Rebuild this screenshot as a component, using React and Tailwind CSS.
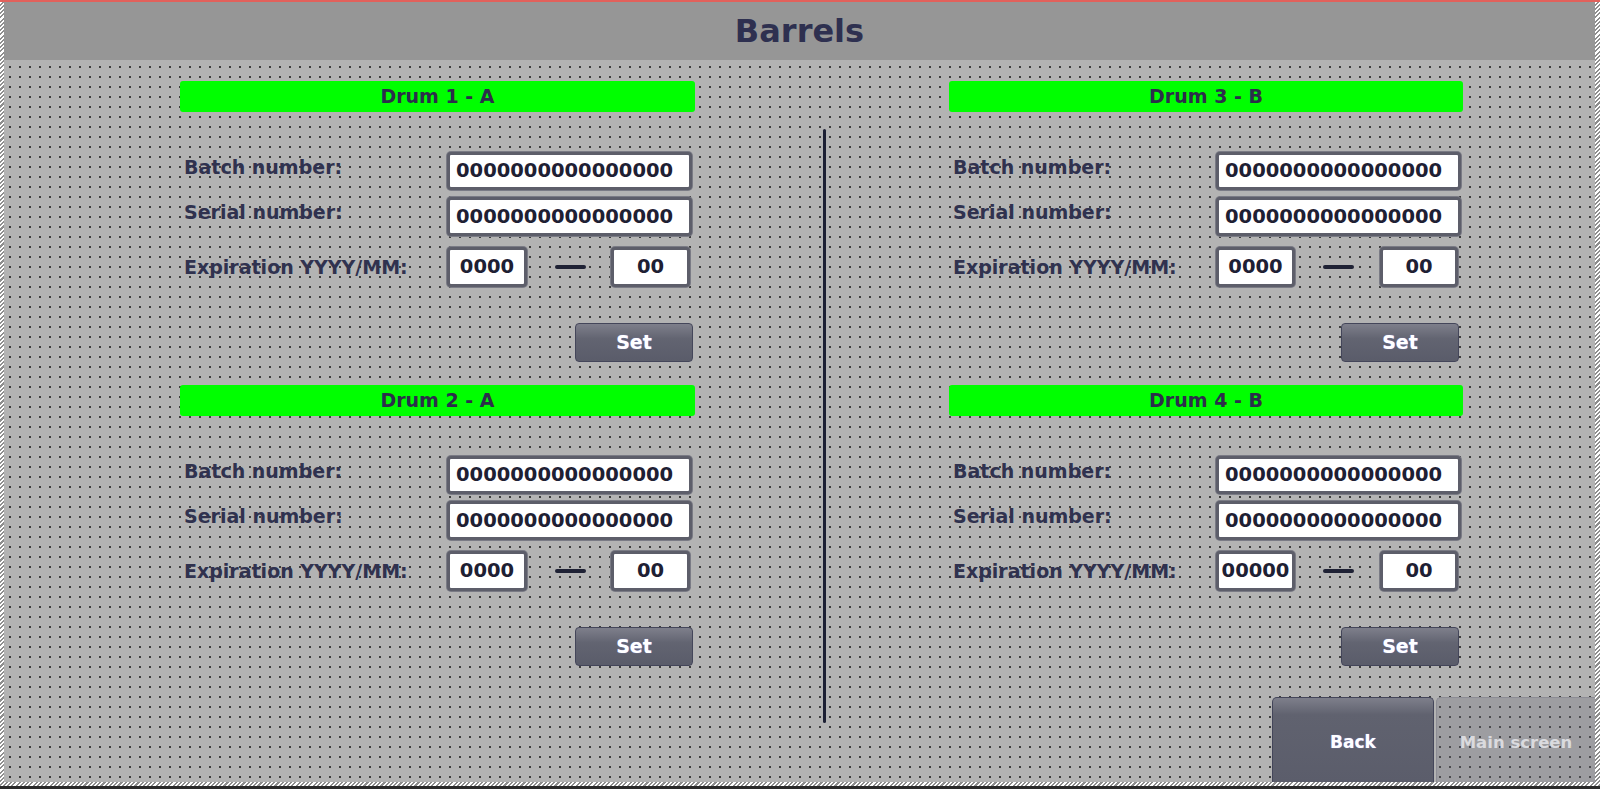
const hatch = 'bg-[repeating-linear-gradient(135deg,#ffffff_0px,#ffffff_1.5px,#8e8e8e_1.5px,#8e8e8e_3px)]'

const drums = [
  [
    { title: 'Drum 1 - A', year: '0000' },
    { title: 'Drum 2 - A', year: '0000' },
  ],
  [
    { title: 'Drum 3 - B', year: '0000' },
    { title: 'Drum 4 - B', year: '00000' },
  ],
]

// column geometry (the two sides are nearly identical)
const leftCol = { labelW: 267, inputW: 245, yearW: 80, dashGap: 28, dashW: 31, monthGap: 25, monthW: 79, setX: 395, width: 515 }
const rightCol = { labelW: 267, inputW: 245, yearW: 79, dashGap: 28, dashW: 31, monthGap: 26, monthW: 78, setX: 392, width: 514 }

function Field({ value, width, height, center }) {
  return (
    <div
      style={{ width, height }}
      className={`bg-white border-[3px] border-[#5d5e6a] rounded-[4px] shadow-[0_0_0_1px_#7a7b85] flex items-center overflow-hidden whitespace-nowrap text-[19.5px] font-bold text-[#1e2033] ${center ? 'justify-center' : 'pl-[6px]'}`}
    >
      {value}
    </div>
  )
}

function Label({ children, width, lift }) {
  return (
    <div style={{ width }} className={`pl-[4px] text-[19px] font-bold text-[#30324f] whitespace-nowrap ${lift ? 'mb-[8px]' : ''}`}>
      {children}
    </div>
  )
}

function SetButton({ x }) {
  return (
    <button
      style={{ marginLeft: x }}
      className="w-[118px] h-[39px] rounded-[4px] border border-[#44465a] bg-[linear-gradient(#7e7f8b,#626471_40%,#5a5c6a)] text-white text-[19px] font-bold [text-shadow:0_0_1px_#9aa0ff]"
    >
      Set
    </button>
  )
}

function Drum({ drum, g, first }) {
  return (
    <div className={first ? '' : 'mt-[23px]'}>
      <div className="h-[31px] bg-[#00ff00] rounded-[3px] flex items-center justify-center text-[19px] font-bold text-[#2c2e4b]">
        {drum.title}
      </div>
      <div className="mt-[40px] h-[38px] flex items-center">
        <Label width={g.labelW} lift>Batch number:</Label>
        <Field value="0000000000000000" width={g.inputW} height={38} />
      </div>
      <div className="mt-[7px] h-[39px] flex items-center">
        <Label width={g.labelW} lift>Serial number:</Label>
        <Field value="0000000000000000" width={g.inputW} height={39} />
      </div>
      <div className="mt-[11px] h-[40px] flex items-center">
        <Label width={g.labelW}>Expiration YYYY/MM:</Label>
        <Field value={drum.year} width={g.yearW} height={40} center />
        <div style={{ marginLeft: g.dashGap, width: g.dashW }} className="h-[4px] rounded-full bg-[#1f2235]" />
        <div style={{ marginLeft: g.monthGap }}>
          <Field value="00" width={g.monthW} height={40} center />
        </div>
      </div>
      <div className="mt-[36px] flex">
        <SetButton x={g.setX} />
      </div>
    </div>
  )
}

function Column({ items, g }) {
  return (
    <div style={{ width: g.width }} className="flex flex-col shrink-0">
      {items.map((d, i) => (
        <Drum key={d.title} drum={d} g={g} first={i === 0} />
      ))}
    </div>
  )
}

export default function App() {
  return (
    <div className="w-[1600px] h-[789px] flex flex-col overflow-hidden bg-[#b3b3b3] font-['DejaVu_Sans',sans-serif]">
      <div className="h-[2px] bg-[#e2615b] shrink-0" />
      <div className="flex flex-1 min-h-0">
        <div className={`w-[4px] shrink-0 ${hatch}`} />
        <div className="flex-1 flex flex-col min-w-0">
          <header className="h-[58px] shrink-0 bg-[#969696] flex items-center justify-center text-[32px] font-bold text-[#2e3050]">
            Barrels
          </header>
          <main className="flex-1 flex pl-[176px] pt-[21px] bg-[radial-gradient(circle,#2a2a2a_0.65px,transparent_1.05px)] bg-[length:10px_10px] bg-[position:1px_2px]">
            <Column items={drums[0]} g={leftCol} />
            <div className="ml-[128px] mt-[48px] w-[3px] h-[594px] shrink-0 rounded-full bg-[#1c1f33]" />
            <div className="flex-1 flex flex-col pl-[123px]">
              <Column items={drums[1]} g={rightCol} />
              <div className="mt-auto flex justify-end gap-[2px]">
                <button className="w-[162px] h-[85px] pt-[6px] rounded-t-[5px] border border-b-0 border-[#44465a] bg-[linear-gradient(#7e7f8b,#60626f_20%,#5b5d6b)] text-white text-[17px] font-bold [text-shadow:0_0_1px_#9aa0ff]">
                  Back
                </button>
                <button className="w-[159px] h-[85px] pt-[7px] rounded-tl-[5px] border-l border-t border-[#8d8d95] bg-[rgba(105,105,118,0.3)] text-[#dadade] text-[16.5px] font-bold">
                  Main screen
                </button>
              </div>
            </div>
          </main>
        </div>
        <div className={`w-[5px] shrink-0 ${hatch}`} />
      </div>
      <div className={`h-[4px] shrink-0 ${hatch}`} />
      <div className="h-[3px] shrink-0 bg-[#2a2a2a]" />
    </div>
  )
}
